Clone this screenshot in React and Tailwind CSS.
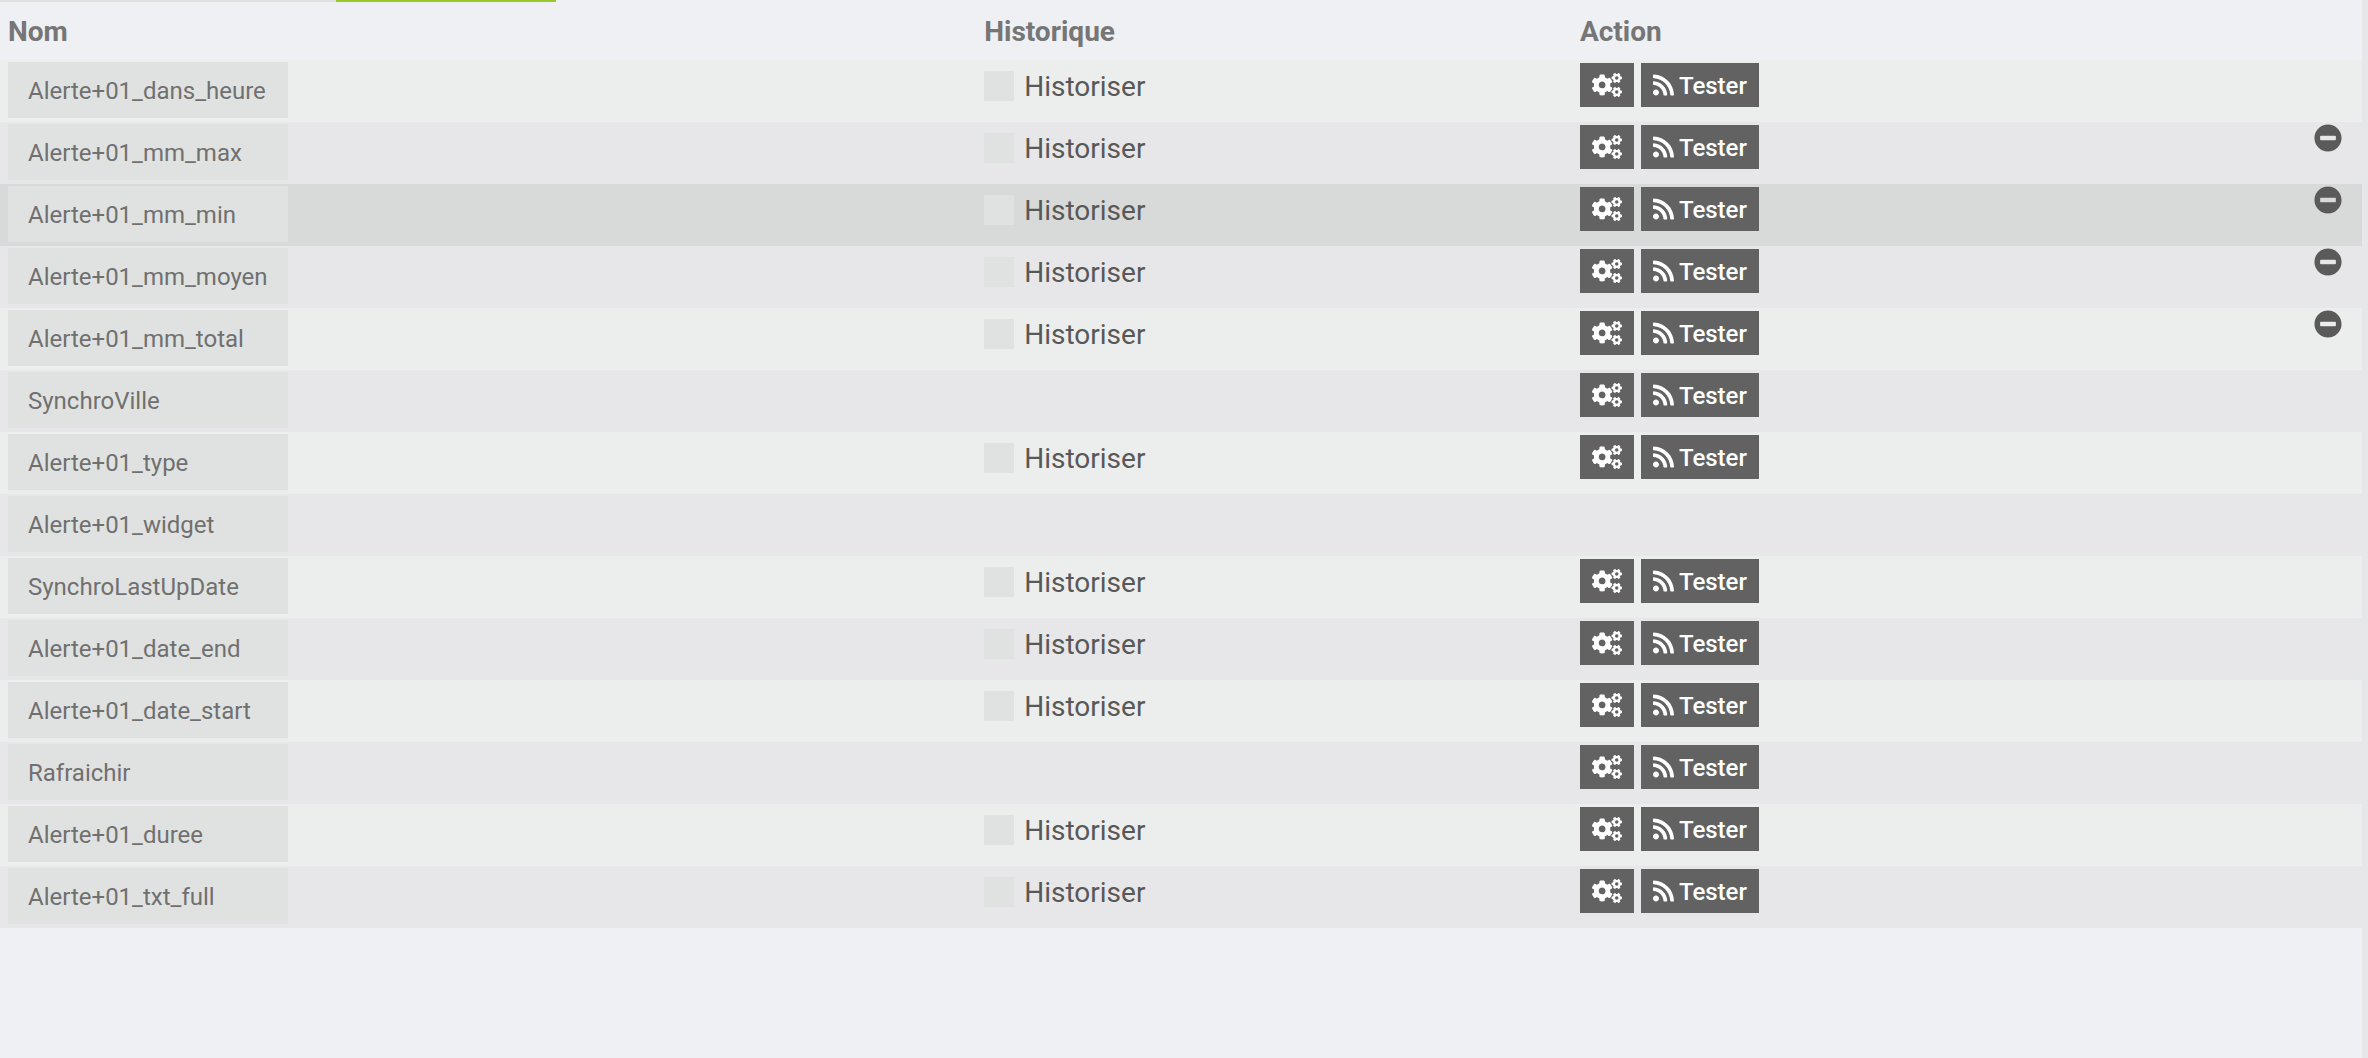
import React from "react";
import { FaCogs, FaRss, FaMinusCircle } from "react-icons/fa";

const commands = [
  { name: "Alerte+01_dans_heure", history: true, action: true },
  { name: "Alerte+01_mm_max", history: true, action: true, removable: true },
  { name: "Alerte+01_mm_min", history: true, action: true, removable: true, active: true },
  { name: "Alerte+01_mm_moyen", history: true, action: true, removable: true },
  { name: "Alerte+01_mm_total", history: true, action: true, removable: true },
  { name: "SynchroVille", action: true },
  { name: "Alerte+01_type", history: true, action: true },
  { name: "Alerte+01_widget" },
  { name: "SynchroLastUpDate", history: true, action: true },
  { name: "Alerte+01_date_end", history: true, action: true },
  { name: "Alerte+01_date_start", history: true, action: true },
  { name: "Rafraichir", action: true },
  { name: "Alerte+01_duree", history: true, action: true },
  { name: "Alerte+01_txt_full", history: true, action: true },
];

function HistoryToggle() {
  return (
    <label className="flex items-start gap-[10px] pt-[5px] text-[28px] leading-10 text-[#585858]">
      <input type="checkbox" className="mt-1 size-[30px] shrink-0 appearance-none bg-[#e0e2e1] checked:bg-[#96c927]" />
      Historiser
    </label>
  );
}

function Actions() {
  return (
    <div className="flex gap-[7px] pt-px">
      <button type="button" aria-label="Configurer" className="flex h-11 items-center bg-[#626262] px-3 text-white">
        <FaCogs className="h-6 w-[30px]" />
      </button>
      <button type="button" className="flex h-11 items-center gap-[5px] bg-[#626262] px-3 text-2xl font-medium text-white">
        <FaRss className="h-6 w-[21px]" />
        <span className="pt-[2px]">Tester</span>
      </button>
    </div>
  );
}

function CommandRow({ command }) {
  const stripe = command.active ? "bg-[#d8dad9]" : "odd:bg-[#eceeed] even:bg-[#e7e7e9]";
  return (
    <tr className={`h-[62px] align-top ${stripe}`}>
      <td className="px-2 pt-[2px]">
        <input
          type="text"
          aria-label="Nom"
          defaultValue={command.name}
          className="block h-14 w-[280px] bg-[#e0e2e1] px-5 pt-[2px] text-2xl text-[#707070] outline-none"
        />
      </td>
      <td className="px-2 pt-[2px]">{command.history && <HistoryToggle />}</td>
      <td className="px-2 pt-[2px]">{command.action && <Actions />}</td>
      <td className="pt-[2px] pr-5">
        {command.removable && (
          <button type="button" aria-label="Supprimer" className="ml-auto block text-[28px] leading-7 text-[#5a5a5a]">
            <FaMinusCircle />
          </button>
        )}
      </td>
    </tr>
  );
}

export default function App() {
  return (
    <div className="min-h-screen bg-[#e7e7e9] pr-[6px] font-[Roboto,sans-serif]">
      <main className="min-h-screen bg-[#eff0f3]">
        <div className="flex h-[2px]">
          <div className="w-[336px] bg-[#e0e2e1]" />
          <div className="w-[220px] bg-[#96c927]" />
        </div>
        <table className="w-full table-fixed border-collapse text-left">
          <colgroup>
            <col className="w-[41.33%]" />
            <col className="w-[25.22%]" />
            <col className="w-[25.22%]" />
            <col />
          </colgroup>
          <thead>
            <tr className="h-[58px] align-top text-[28px] leading-10 text-[#767676]">
              <th scope="col" className="px-2 pt-[10px] font-bold">Nom</th>
              <th scope="col" className="px-2 pt-[10px] font-bold">Historique</th>
              <th scope="col" className="px-2 pt-[10px] font-bold">Action</th>
              <td />
            </tr>
          </thead>
          <tbody>
            {commands.map((command) => (
              <CommandRow key={command.name} command={command} />
            ))}
          </tbody>
        </table>
      </main>
    </div>
  );
}
